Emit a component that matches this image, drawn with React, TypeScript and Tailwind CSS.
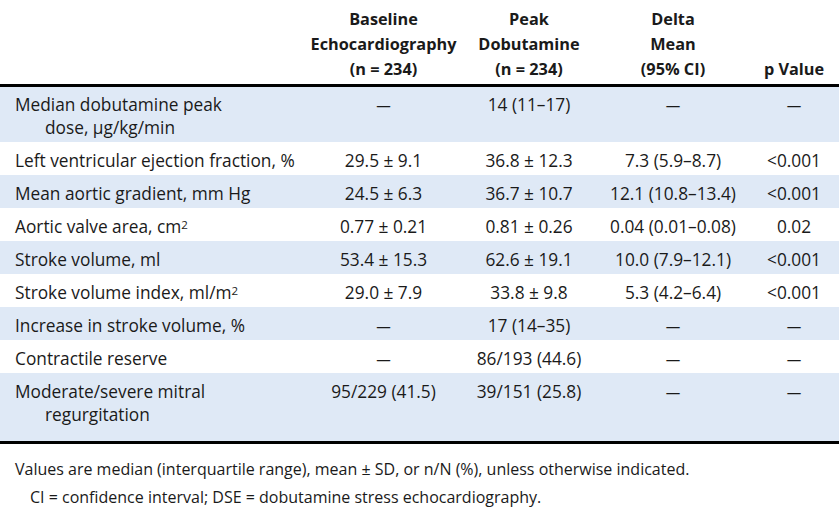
const rows: { label: string; sup?: string; cells: string[]; wrap?: [string, string] }[] = [
  { label: "", wrap: ["Median dobutamine peak", "dose, µg/kg/min"], cells: ["—", "14 (11–17)", "—", "—"] },
  { label: "Left ventricular ejection fraction, %", cells: ["29.5 ± 9.1", "36.8 ± 12.3", "7.3 (5.9–8.7)", "<0.001"] },
  { label: "Mean aortic gradient, mm Hg", cells: ["24.5 ± 6.3", "36.7 ± 10.7", "12.1 (10.8–13.4)", "<0.001"] },
  { label: "Aortic valve area, cm", sup: "2", cells: ["0.77 ± 0.21", "0.81 ± 0.26", "0.04 (0.01–0.08)", "0.02"] },
  { label: "Stroke volume, ml", cells: ["53.4 ± 15.3", "62.6 ± 19.1", "10.0 (7.9–12.1)", "<0.001"] },
  { label: "Stroke volume index, ml/m", sup: "2", cells: ["29.0 ± 7.9", "33.8 ± 9.8", "5.3 (4.2–6.4)", "<0.001"] },
  { label: "Increase in stroke volume, %", cells: ["—", "17 (14–35)", "—", "—"] },
  { label: "Contractile reserve", cells: ["—", "86/193 (44.6)", "—", "—"] },
  { label: "", wrap: ["Moderate/severe mitral", "regurgitation"], cells: ["95/229 (41.5)", "39/151 (25.8)", "—", "—"] },
];

export default function App() {
  return (
    <div className="w-[839px] h-[514px] bg-white text-[#1a1a1a] font-['Open_Sans',sans-serif] overflow-hidden">
      <table className="w-full table-fixed border-collapse">
        <colgroup>
          <col className="w-[306px]" />
          <col className="w-[155px]" />
          <col className="w-[136px]" />
          <col className="w-[152px]" />
          <col className="w-[90px]" />
        </colgroup>
        <thead>
          <tr className="border-b-[3px] border-black text-[16.3px] leading-[25px] font-bold">
            <th className="pt-[7px] pb-[2px]" />
            <th className="pt-[7px] pb-[2px] text-center align-bottom whitespace-nowrap">
              Baseline<br />Echocardiography<br />(n = 234)
            </th>
            <th className="pt-[7px] pb-[2px] text-center align-bottom">
              Peak<br />Dobutamine<br />(n = 234)
            </th>
            <th className="pt-[7px] pb-[2px] text-center align-bottom">
              Delta<br />Mean<br />(95% CI)
            </th>
            <th className="pt-[7px] pb-[2px] text-center align-bottom whitespace-nowrap">p Value</th>
          </tr>
        </thead>
        <tbody className="text-[17.3px] leading-[23px]">
          {rows.map((r, i) => {
            const last = i === rows.length - 1;
            const pad = last ? "pt-[7px] pb-[15px]" : i === 0 ? "pt-[5.5px] pb-[3.5px]" : "pt-[6.5px] pb-[3.5px]";
            return (
              <tr key={i} className={`${i % 2 === 0 ? "bg-[#dfe9f6]" : "bg-white"} ${last ? "border-b-[3px] border-black" : ""}`}>
                <td className={`${pad} pl-[15px] align-top whitespace-nowrap`}>
                  {r.wrap ? (
                    <>
                      <div>{r.wrap[0]}</div>
                      <div className="pl-[30px]">{r.wrap[1]}</div>
                    </>
                  ) : (
                    <>
                      {r.label}
                      <sup className="text-[11.5px] relative -top-[4px] leading-none">{r.sup}</sup>
                    </>
                  )}
                </td>
                {r.cells.map((c, j) => (
                  <td key={j} className={`${pad} text-center align-top whitespace-nowrap`}>
                    {c === "—" ? <span className="text-[14.5px] leading-none">—</span> : c}
                  </td>
                ))}
              </tr>
            );
          })}
        </tbody>
      </table>
      <div className="pt-[11px] text-[16px] leading-[28px]">
        <p className="pl-[15px]">Values are median (interquartile range), mean ± SD, or n/N (%), unless otherwise indicated.</p>
        <p className="pl-[30px]">CI = confidence interval; DSE = dobutamine stress echocardiography.</p>
      </div>
    </div>
  );
}
